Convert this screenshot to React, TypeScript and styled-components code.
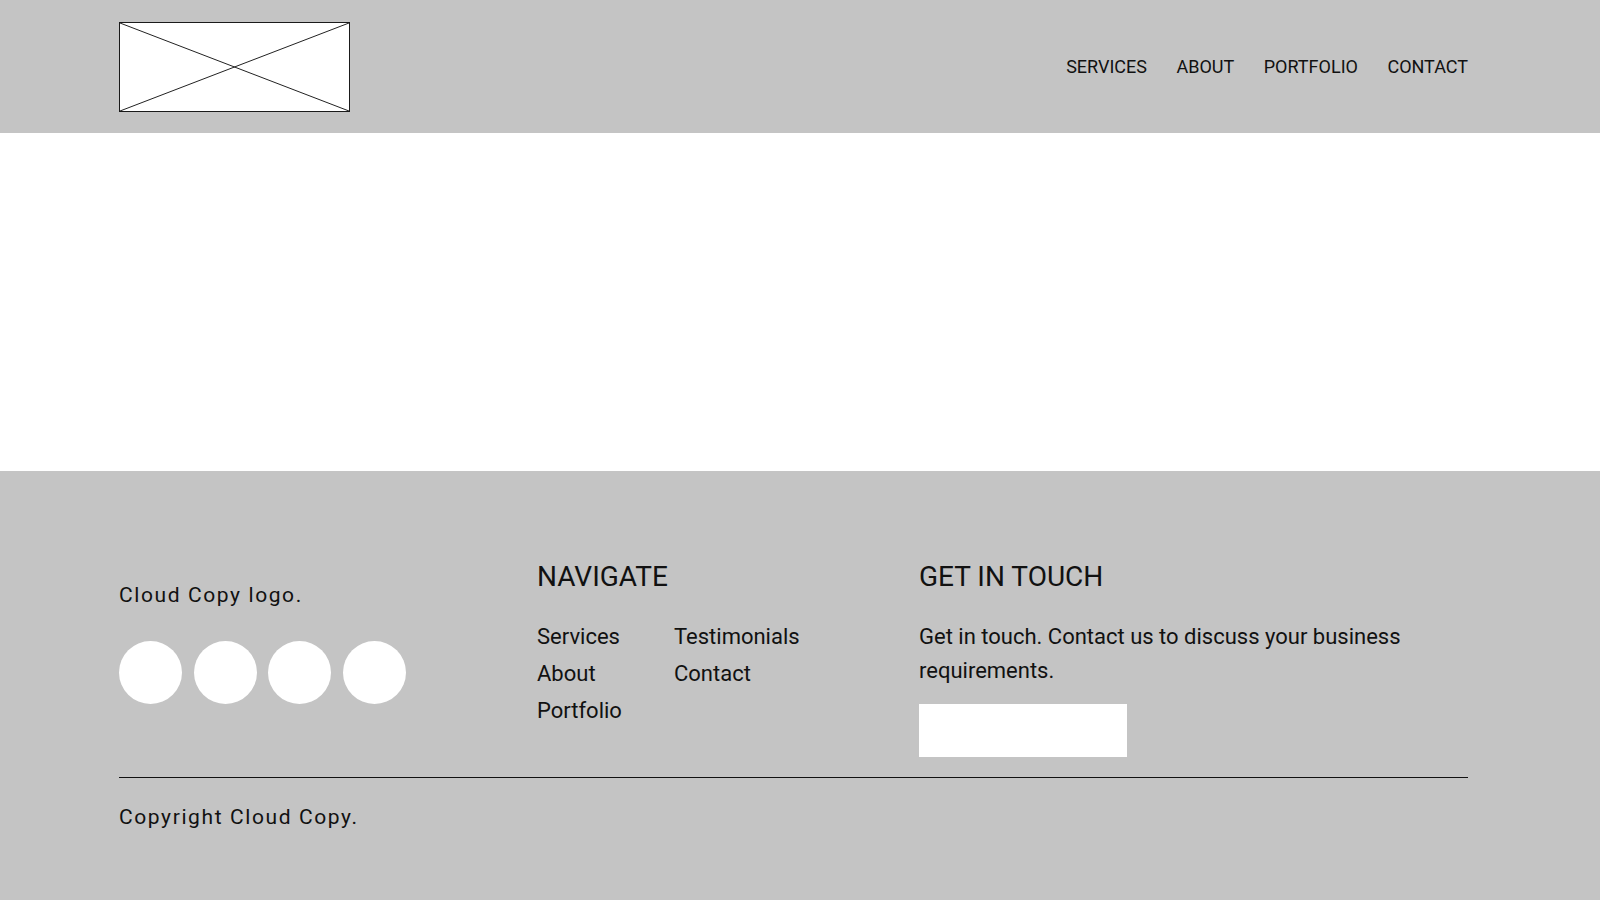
import React from "react";
import styled, { createGlobalStyle } from "styled-components";

const GlobalStyle = createGlobalStyle`
  html, body { margin: 0; padding: 0; background: #ffffff; }
  body { font-family: Roboto, "Liberation Sans", Arial, sans-serif; color: #000; }
  * { box-sizing: border-box; }
`;

const Container = styled.div`
  width: 1349px;
  margin-left: 119px;
`;

const Header = styled.header`
  height: 133px;
  background: #c4c4c4;
`;

const HeaderInner = styled(Container)`
  height: 100%;
  display: flex;
  align-items: center;
  justify-content: space-between;
`;

const LogoBox = styled.div`
  width: 231px;
  height: 90px;
  background: #fff;
  border: 1px solid #1a1a1a;
  display: flex;
`;

const Nav = styled.nav`
  display: flex;
  gap: 29.5px;
`;

const NavLink = styled.a`
  font-size: 18px;
  line-height: 22px;
  color: #111;
  text-decoration: none;
`;

const Hero = styled.main`
  height: 338px;
  background: #fff;
`;

const Footer = styled.footer`
  background: #c4c4c4;
  height: 429px;
  padding-top: 89px;
`;

const FooterGrid = styled(Container)`
  display: grid;
  grid-template-columns: 418px 382px 1fr;
  align-items: start;
`;

const BrandCol = styled.div`
  padding-top: 23px;
  display: flex;
  flex-direction: column;
  gap: 33px;
`;

const SpacedText = styled.p`
  margin: 0;
  font-size: 21px;
  line-height: 25px;
  letter-spacing: 1.6px;
  color: #111;
`;

const Socials = styled.div`
  display: flex;
  gap: 11.5px;
`;

const Circle = styled.span`
  width: 63px;
  height: 63px;
  border-radius: 50%;
  background: #fff;
  display: block;
`;

const Heading = styled.h3`
  margin: 0;
  font-size: 28px;
  font-weight: 400;
  line-height: 33px;
  color: #111;
`;

const LinksGrid = styled.div`
  margin-top: 24.5px;
  display: grid;
  grid-template-columns: 137px auto;
  grid-auto-flow: column;
  grid-template-rows: repeat(3, 37px);
  justify-content: start;
`;

const FooterLink = styled.a`
  font-size: 22px;
  line-height: 37px;
  color: #111;
  text-decoration: none;
`;

const Paragraph = styled.p`
  margin: 26.5px 0 0;
  font-size: 22px;
  line-height: 34px;
  color: #111;
  max-width: 540px;
`;

const CtaButton = styled.button`
  display: block;
  margin-top: 16.5px;
  width: 208px;
  height: 53px;
  background: #fff;
  border: none;
  padding: 0;
`;

const Divider = styled.hr`
  margin: 20px 0 0;
  border: none;
  border-top: 1px solid #111;
  height: 0;
`;

const Copyright = styled(SpacedText)`
  margin-top: 27px;
`;

const LogoPlaceholder = () => (
  <svg width="229" height="88" viewBox="0 0 229 88" preserveAspectRatio="none">
    <line x1="0" y1="0" x2="229" y2="88" stroke="#222" strokeWidth="1" />
    <line x1="0" y1="88" x2="229" y2="0" stroke="#222" strokeWidth="1" />
  </svg>
);

export default function App() {
  return (
    <>
      <GlobalStyle />
      <Header>
        <HeaderInner>
          <LogoBox>
            <LogoPlaceholder />
          </LogoBox>
          <Nav>
            <NavLink href="#">SERVICES</NavLink>
            <NavLink href="#">ABOUT</NavLink>
            <NavLink href="#">PORTFOLIO</NavLink>
            <NavLink href="#">CONTACT</NavLink>
          </Nav>
        </HeaderInner>
      </Header>
      <Hero />
      <Footer>
        <FooterGrid>
          <BrandCol>
            <SpacedText>Cloud Copy logo.</SpacedText>
            <Socials>
              <Circle />
              <Circle />
              <Circle />
              <Circle />
            </Socials>
          </BrandCol>
          <div>
            <Heading>NAVIGATE</Heading>
            <LinksGrid>
              <FooterLink href="#">Services</FooterLink>
              <FooterLink href="#">About</FooterLink>
              <FooterLink href="#">Portfolio</FooterLink>
              <FooterLink href="#">Testimonials</FooterLink>
              <FooterLink href="#">Contact</FooterLink>
            </LinksGrid>
          </div>
          <div>
            <Heading>GET IN TOUCH</Heading>
            <Paragraph>
              Get in touch. Contact us to discuss your business requirements.
            </Paragraph>
            <CtaButton aria-label="Contact" />
          </div>
        </FooterGrid>
        <Container>
          <Divider />
          <Copyright>Copyright Cloud Copy.</Copyright>
        </Container>
      </Footer>
    </>
  );
}
